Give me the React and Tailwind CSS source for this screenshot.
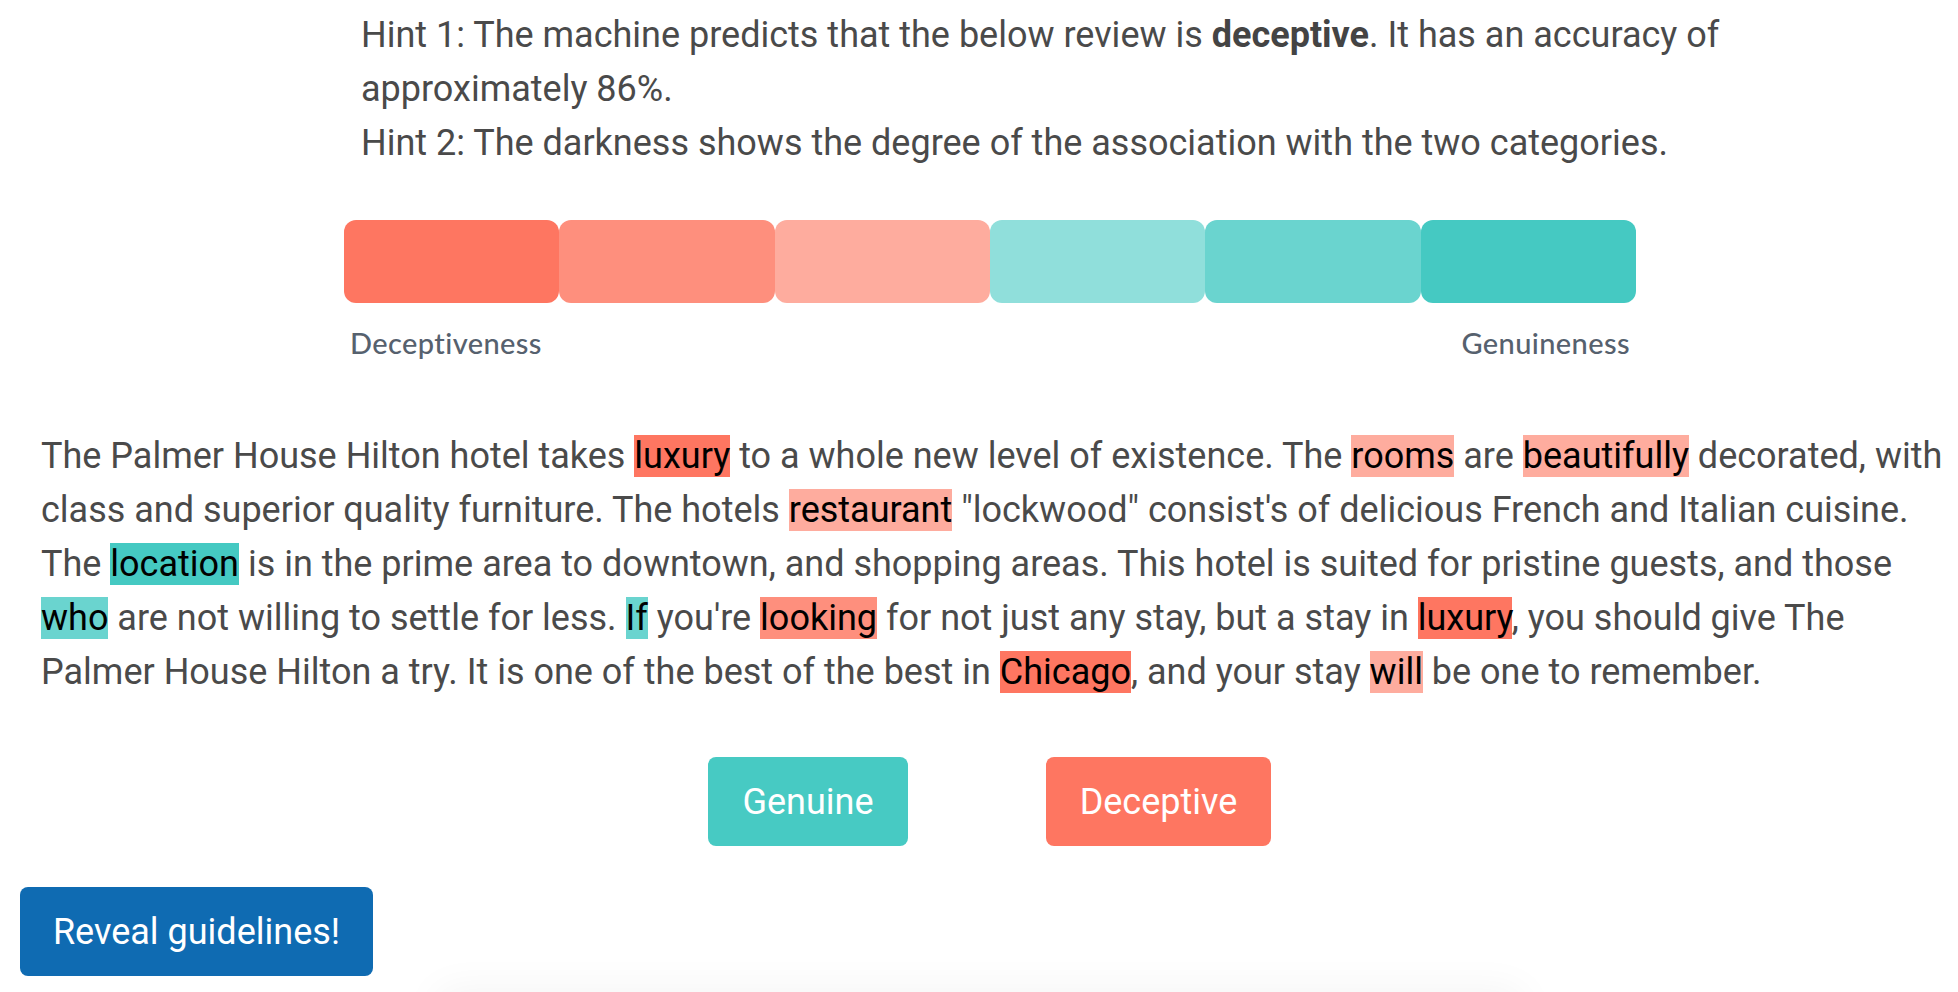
import React from "react";

const scale = [
  "bg-[#fe7661]",
  "bg-[#fe8f7d]",
  "bg-[#feac9e]",
  "bg-[#90dfdb]",
  "bg-[#6ad4cf]",
  "bg-[#45c9c2]",
];

// weight -> highlight colour
const tone = {
  d3: "bg-[#fe7661]",
  d2: "bg-[#fe8f7d]",
  d1: "bg-[#feac9e]",
  g1: "bg-[#90dfdb]",
  g2: "bg-[#6ad4cf]",
  g3: "bg-[#45c9c2]",
};

const review = [
  ["The Palmer House Hilton hotel takes "],
  ["luxury", "d3"],
  [" to a whole new level of existence. The "],
  ["rooms", "d1"],
  [" are "],
  ["beautifully", "d1"],
  [" decorated, with class and superior quality furniture. The hotels "],
  ["restaurant", "d1"],
  [' "lockwood" consist\'s of delicious French and Italian cuisine. The '],
  ["location", "g3"],
  [" is in the prime area to downtown, and shopping areas. This hotel is suited for pristine guests, and those "],
  ["who", "g2"],
  [" are not willing to settle for less. "],
  ["If", "g2"],
  [" you're "],
  ["looking", "d2"],
  [" for not just any stay, but a stay in "],
  ["luxury", "d3"],
  [", you should give The Palmer House Hilton a try. It is one of the best of the best in "],
  ["Chicago", "d3"],
  [", and your stay "],
  ["will", "d1"],
  [" be one to remember."],
];

function Word({ text, level }) {
  if (!level) return text;
  return <span className={`${tone[level]} text-black`}>{text}</span>;
}

export default function App() {
  return (
    <div className="min-h-screen bg-white text-[#4a4a4a] font-['Roboto',sans-serif]">
      <div className="pl-[361px] pt-[8px] w-[1780px] text-[36px] leading-[54px]">
        <div>
          Hint 1: The machine predicts that the below review is{" "}
          <span className="font-bold text-[#444]">deceptive</span>. It has an accuracy of approximately 86%.
        </div>
        <div>Hint 2: The darkness shows the degree of the association with the two categories.</div>
      </div>

      <div className="ml-[344px] mt-[50px] w-[1292px]">
        <div className="flex h-[83px]">
          {scale.map((c) => (
            <div key={c} className={`${c} flex-1 rounded-[12px]`} />
          ))}
        </div>
        <div className="flex justify-between px-[6px] mt-[23px] h-[34px] leading-[34px] text-[29px] font-medium tracking-[0.4px] text-[#56616e] font-['Lato',sans-serif]">
          <span>Deceptiveness</span>
          <span>Genuineness</span>
        </div>
      </div>

      <p className="mt-[69px] pl-[41px] pr-[10px] text-[36px] leading-[54px]">
        {review.map(([t, l], i) => (
          <Word key={i} text={t} level={l} />
        ))}
      </p>

      <div className="flex mt-[58px] ml-[708px] gap-[138px] text-[36px] text-white">
        <button className="h-[89px] w-[200px] rounded-[8px] bg-[#47cac3]">Genuine</button>
        <button className="h-[89px] w-[225px] rounded-[8px] bg-[#fe7661]">Deceptive</button>
      </div>

      <button className="block mt-[41px] ml-[20px] h-[89px] w-[353px] rounded-[8px] bg-[#0f6bb2] text-[36px] text-white">
        Reveal guidelines!
      </button>

      <div className="mt-[20px] ml-[437px] w-[1086px] h-[200px] rounded-[12px] bg-white shadow-[0_-6px_40px_rgba(0,0,0,0.05)]" />
    </div>
  );
}
